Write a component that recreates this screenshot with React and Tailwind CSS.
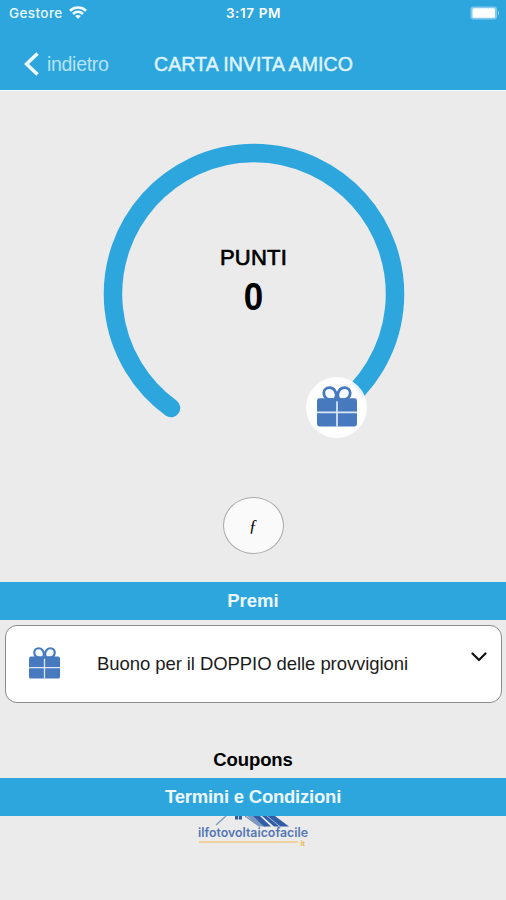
import React from "react";

const sans = "font-['Liberation_Sans',Arial,sans-serif]";

function Gift({ className }) {
  return (
    <svg viewBox="0 0 40 42" preserveAspectRatio="none" className={className}>
      <g fill="#f4fafe" stroke="#4779bf" strokeWidth="2.800">
        <path d="M19.300 9C18.500 4 16 1.600 12.500 1.600C9 1.600 6.800 4 6.800 7C6.800 11 9.500 13.500 13 14H17C18.500 13 19.300 11 19.300 9Z" />
        <path d="M20.700 9C21.500 4 24 1.600 27.500 1.600C31 1.600 33.200 4 33.200 7C33.200 11 30.500 13.500 27 14H23C21.500 13 20.700 11 20.700 9Z" />
      </g>
      <rect x="0" y="12.500" width="40" height="29" rx="2.500" fill="#4779bf" />
      <path d="M20 15.500V41.500M0 27H40" stroke="#dce8f8" strokeWidth="1.700" />
    </svg>
  );
}

function StatusBar() {
  return (
    <div className="flex h-[26px] items-center justify-between pl-[9px] pr-[6px] font-['Inter',sans-serif] text-[13.5px] font-medium text-[#eaf7ff]">
      <div className="flex w-[170px] items-center gap-[6px]">
        <span className="tracking-[0.4px]">Gestore</span>
        <svg viewBox="0 0 18 13" className="mb-px h-[13px] w-[18px]">
          <g fill="none" stroke="#f4fbff" strokeWidth="2.600">
            <path d="M1 4.700C5.500.500 12.500.500 17 4.700" />
            <path d="M4 8C7 5.200 11 5.200 14 8" />
          </g>
          <path d="M6.200 10.100C7.800 8.700 10.200 8.700 11.800 10.100L9 12.900Z" fill="#f4fbff" />
        </svg>
      </div>
      <span className="whitespace-nowrap pr-[2px] text-[13.500px] font-semibold tracking-[0.600px] text-white">3:17 PM</span>
      <div className="flex w-[170px] justify-end">
        <svg viewBox="0 0 30 14" className="h-[14px] w-[30px]">
          <rect x=".5" y=".5" width="26.500" height="13" rx="3" fill="#83c9ed" />
          <rect x="2.500" y="2.300" width="22.500" height="9.400" rx="1.500" fill="#fff" />
          <path d="M28 4.500Q30 7 28 9.500Z" fill="#a9daf3" />
        </svg>
      </div>
    </div>
  );
}

function Band({ children, className }) {
  return (
    <div className={`flex items-center justify-center bg-[#2da6de] font-bold text-[#edf8fe] ${className}`}>
      {children}
    </div>
  );
}

export default function App() {
  return (
    <div className={`flex h-[900px] w-[506px] flex-col overflow-hidden bg-[#ebebeb] text-black ${sans}`}>
      <header className="h-[91px] shrink-0 border-b border-[#f8fcfe] bg-[#2da6de]">
        <StatusBar />
        <div className="flex h-[64px] items-center pt-[14px] text-[#dff3fd]">
          <svg viewBox="0 0 16 24" className="mb-[3px] ml-[24px] h-[24px] w-[16px]">
            <path d="M13.500 1.500L2.500 12L13.500 22.500" fill="none" stroke="#f0faff" strokeWidth="3.600" />
          </svg>
          <span className="ml-[7px] w-[62px] text-[19.500px] tracking-[-0.300px] text-[#b9e3f7]">indietro</span>
          <h1 className="ml-[45px] whitespace-nowrap text-[19.500px] tracking-[0.100px] [-webkit-text-stroke:0.5px]">
            CARTA INVITA AMICO
          </h1>
        </div>
      </header>

      <section className="relative h-[406px] shrink-0">
        <svg viewBox="0 0 506 406" className="h-[406px] w-[506px]">
          <path
            d="M171 317A141 141 0 1 1 337 317"
            fill="none"
            stroke="#2da6de"
            strokeWidth="18.500"
            strokeLinecap="round"
          />
        </svg>
        <div className="absolute inset-x-0 top-[153px] flex flex-col items-center pl-px">
          <span className="text-[22px] leading-[28px] tracking-[0.200px] [-webkit-text-stroke:0.7px]">PUNTI</span>
          <span className="scale-x-[0.92] text-[38px] font-bold leading-[51px]">0</span>
        </div>
        <div className="absolute left-[306px] top-[286px] flex h-[61px] w-[61px] items-center justify-center rounded-full bg-[radial-gradient(circle,#fff_60%,rgba(255,255,255,0.88)_66%)] pb-[3px]">
          <Gift className="h-[41px] w-[40px]" />
        </div>
      </section>

      <div className="flex h-[85px] shrink-0 items-start justify-center">
        <div className="flex h-[57px] w-[61px] items-center justify-center rounded-[50%] border border-[#aaa] bg-[#fafafa] font-['Liberation_Serif',serif] text-[17px] italic">
          <span>ƒ</span>
        </div>
      </div>

      <Band className="h-[38px] shrink-0 text-[18.500px]">Premi</Band>
      <div className="ml-[5px] mt-[5px] flex h-[78px] w-[497px] shrink-0 items-center rounded-[12px] border border-[#8b8b8b] bg-white">
        <Gift className="mb-[3px] ml-[23px] h-[32px] w-[31px]" />
        <span className="ml-[37px] whitespace-nowrap text-[18.500px] tracking-[-0.070px] text-[#1c1c1c]">Buono per il DOPPIO delle provvigioni</span>
        <svg viewBox="0 0 16 10" className="mb-[14px] ml-auto mr-[14px] h-[10px] w-[16px]">
          <path d="M1.500 1.500L8 8L14.500 1.500" fill="none" stroke="#111" strokeWidth="2.200" strokeLinecap="round" strokeLinejoin="round" />
        </svg>
      </div>

      <h2 className="mt-[46px] h-[29px] shrink-0 text-center text-[18.500px] font-bold leading-[22px] tracking-[-0.100px]">Coupons</h2>
      <Band className="h-[38px] shrink-0 text-[18.500px] tracking-[-0.220px]">Termini e Condizioni</Band>
      <footer className="flex flex-col items-center">
        <svg viewBox="0 0 112 31" className="h-[31px] w-[112px]">
          <path d="M19 9L29 0M48 0L62 10" stroke="#8297b7" strokeWidth="1.300" />
          <path d="M38 0H45V3.500H38Z" fill="#345e94" />
          <path d="M41.500 0V4" stroke="#dce6f2" strokeWidth=".8" />
          <path d="M50 0H58L69 10.500H62Z" fill="#7e98c4" />
          <path d="M56 0H63L74 10.500H67ZM65 0H78L92 10.500H77Z" fill="#315da7" />
          <path d="M70 0L83 10.500" stroke="#a3b8db" strokeWidth="1" />
          <text x="1" y="21.300" textLength="110" lengthAdjust="spacingAndGlyphs" fontSize="12.500" fontWeight="600" fontFamily="Inter, sans-serif" fill="#5577b4">ilfotovoltaicofacile</text>
          <path d="M2 26H101" stroke="#efc982" strokeWidth="1.500" />
          <text x="103.500" y="29.500" fontSize="7" fontWeight="900" fontFamily="Lato, sans-serif" fill="#edb24c">it</text>
        </svg>
      </footer>
    </div>
  );
}
